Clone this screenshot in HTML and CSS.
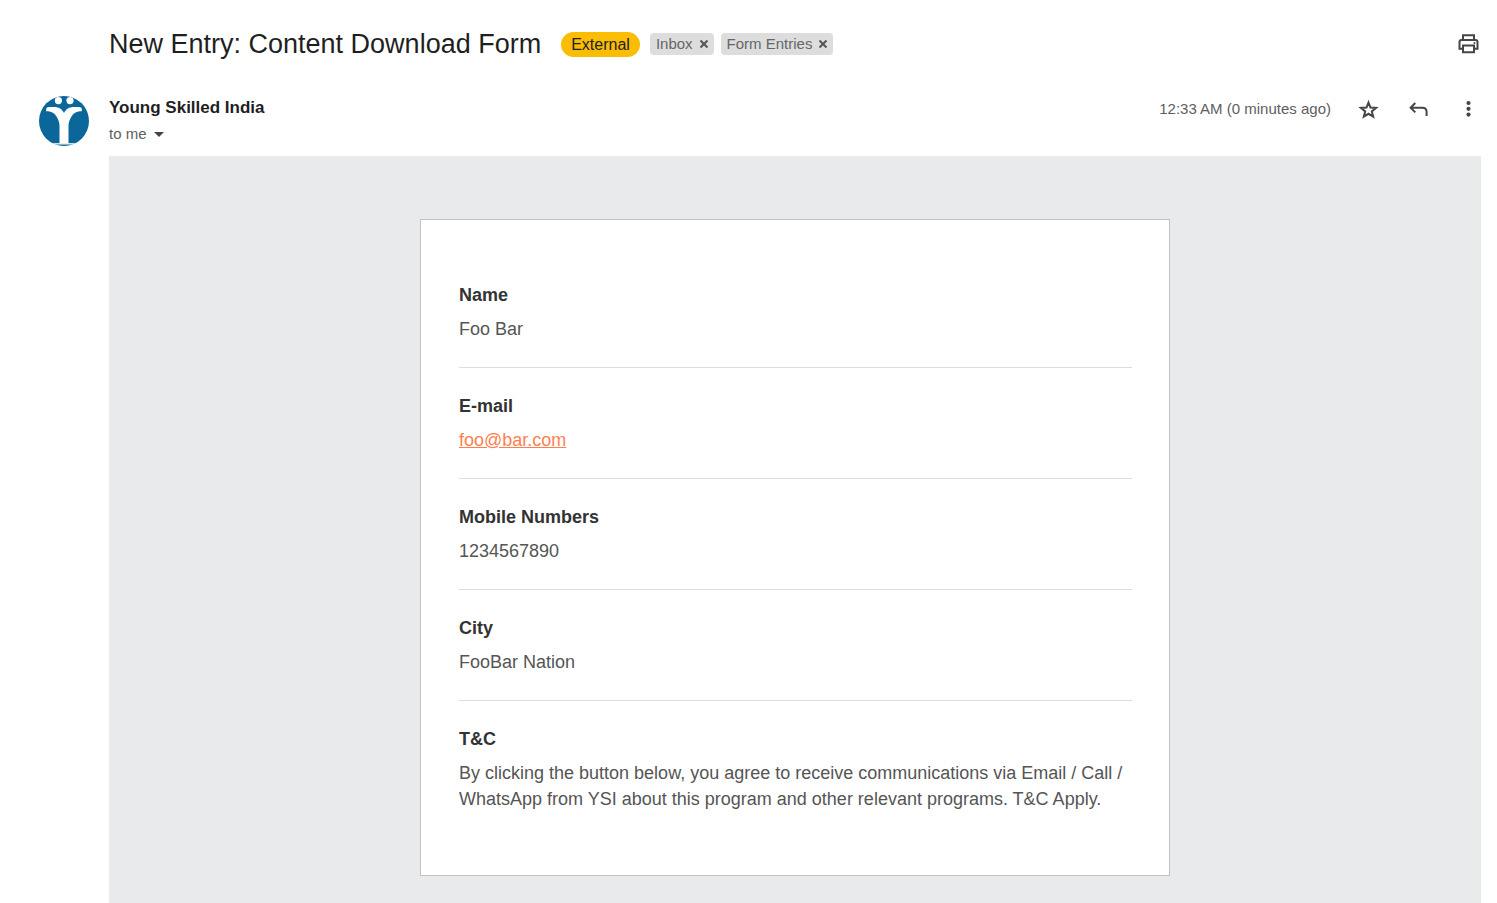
FILE: index.html
```html
<!DOCTYPE html>
<html lang="en">
<head>
<meta charset="utf-8">
<meta name="viewport" content="width=device-width, initial-scale=1">
<title>New Entry: Content Download Form</title>
<link rel="stylesheet" href="styles.css">
</head>
<body>
<header class="subject">
  <h1 class="subject-title">New Entry: Content Download Form</h1>
  <span class="badge">External</span>
  <div class="labels">
    <span class="label">Inbox <button class="label-remove" type="button" aria-label="Remove Inbox"><svg width="8" height="8" viewBox="0 0 8 8"><path d="M.5.5l7 7M7.500.5l-7 7" /></svg></button></span>
    <span class="label">Form Entries <button class="label-remove" type="button" aria-label="Remove Form Entries"><svg width="8" height="8" viewBox="0 0 8 8"><path d="M.5.5l7 7M7.500.5l-7 7" /></svg></button></span>
  </div>
  <button class="icon-button print" type="button" aria-label="Print"><svg width="24" height="24" viewBox="0 0 24 24"><path d="M6 8V3.200h11V8M6 16.800H2.500V10q0-2 2-2h14q2 0 2 2v6.800H17M6 13.500h11v6.700H6z"/><circle cx="17.500" cy="11" r="1" class="solid"/></svg></button>
</header>
<main class="message">
  <svg class="avatar" width="50" height="50" viewBox="0 0 50 50" role="img" aria-label="Young Skilled India">
    <defs><clipPath id="disc"><circle cx="25" cy="25" r="25"/></clipPath></defs>
    <g clip-path="url(#disc)">
      <rect width="50" height="50" fill="#0b6699"/>
      <circle cx="19.400" cy="4.600" r="3.600" fill="#fff"/>
      <circle cx="31" cy="4.600" r="3.600" fill="#fff"/>
      <path d="M7.200 12.500q.5-1.500 2.300-1.500H15c5 0 8 2 10 6 2-4 5-6 10-6h5.500q1.800 0 2.300 1.500v2.700c-5 0-8 1.500-10.300 5.300-1.800 3-3 5.500-3 9.500v17.500h-9V30c0-4-1.200-6.500-3-9.500-2.300-3.800-5.300-5.300-10.300-5.300z" fill="#fff"/>
      <rect y="47.200" width="50" height="1.300" fill="#fff"/>
    </g>
  </svg>
  <div class="message-content">
    <div class="meta">
      <div class="sender">
        <h2 class="sender-name">Young Skilled India</h2>
        <button class="recipient" type="button">to me <svg width="10" height="5" viewBox="0 0 10 5"><path d="M0 0h10L5 5z"/></svg></button>
      </div>
      <div class="actions">
        <time class="time">12:33 AM (0 minutes ago)</time>
        <button class="icon-button" type="button" aria-label="Star"><svg width="24" height="24" viewBox="0 0 24 24"><path d="M11.500 5.500l2 5 5.600.4-4.300 3.500 1.400 5.300-4.700-2.900-4.700 2.900 1.400-5.300-4.300-3.500 5.600-.4z"/></svg></button>
        <button class="icon-button" type="button" aria-label="Reply"><svg width="24" height="24" viewBox="0 0 24 24"><path d="M8.300 6L3.600 10.700l4.700 4.700M3.800 10.700h11.500q4.300 0 4.300 4.300v4"/></svg></button>
        <button class="icon-button" type="button" aria-label="More"><svg width="24" height="24" viewBox="0 0 24 24"><g class="solid"><circle cx="11.500" cy="6" r="2.100"/><circle cx="11.500" cy="11.800" r="2.100"/><circle cx="11.500" cy="17.600" r="2.100"/></g></svg></button>
      </div>
    </div>
    <div class="canvas">
      <dl class="card">
        <div class="field"><dt>Name</dt><dd>Foo Bar</dd></div>
        <div class="field"><dt>E-mail</dt><dd><a href="mailto:foo@bar.com">foo@bar.com</a></dd></div>
        <div class="field"><dt>Mobile Numbers</dt><dd>1234567890</dd></div>
        <div class="field"><dt>City</dt><dd>FooBar Nation</dd></div>
        <div class="field"><dt>T&amp;C</dt><dd>By clicking the button below, you agree to receive communications via Email / Call / WhatsApp from YSI about this program and other relevant programs. T&amp;C Apply.</dd></div>
      </dl>
    </div>
  </div>
</main>
</body>
</html>
```
FILE: styles.css
```css
* { box-sizing: border-box; }

body {
  margin: 0;
  min-height: 100vh;
  display: flex;
  flex-direction: column;
  padding: 24px 16px 0 39px;
  background: #fff;
  color: #202124;
  font-family: Arial, "Liberation Sans", sans-serif;
}

button {
  border: 0;
  padding: 0;
  background: none;
  font: inherit;
  color: inherit;
  cursor: pointer;
}

h1, h2, dl, dd { margin: 0; }

.subject {
  display: flex;
  align-items: center;
  padding-left: 70px;
  height: 40px;
}

.subject-title {
  font-size: 27px;
  line-height: 36px;
  font-weight: 400;
  color: #1f1f1f;
}

.badge {
  margin-left: 20px;
  padding: 0 10px;
  border-radius: 13px;
  background: #fbbc04;
  font-size: 16px;
  line-height: 25px;
}

.labels {
  display: flex;
  gap: 7px;
  margin-left: 10px;
}

.label {
  display: flex;
  align-items: center;
  gap: 7px;
  padding: 0 6px;
  border-radius: 4px;
  background: #ddd;
  color: #666;
  font-size: 15px;
  line-height: 22px;
}

.label-remove { display: flex; }

.label-remove path {
  stroke: #555;
  stroke-width: 2;
}

.icon-button {
  display: flex;
  color: #444746;
}

.icon-button svg {
  fill: none;
  stroke: currentColor;
  stroke-width: 2;
}

.icon-button .solid {
  fill: currentColor;
  stroke: none;
}

.print { margin-left: auto; }

.message {
  flex: 1;
  display: flex;
  gap: 20px;
  padding-top: 32px;
}

.avatar { flex: none; }

.message-content {
  flex: 1;
  display: flex;
  flex-direction: column;
}

.meta {
  display: flex;
  justify-content: space-between;
  height: 60px;
}

.sender-name {
  font-size: 17px;
  line-height: 24px;
  font-weight: 700;
  color: #1f1f1f;
}

.recipient {
  display: flex;
  align-items: center;
  gap: 7px;
  margin-top: 4px;
  font-size: 15px;
  line-height: 20px;
  color: #5e5e5e;
}

.recipient path { fill: #444; }

.actions {
  display: flex;
  align-items: center;
  gap: 26px;
  height: 25px;
}

.time {
  color: #5e5e5e;
  font-size: 15px;
}

.canvas {
  flex: 1;
  padding: 63px 20px 27px;
  background: #e8eaeb;
}

.card {
  max-width: 750px;
  margin: 0 auto;
  padding: 37px 37px 38px 38px;
  border: 1px solid #c1c1c1;
  background: #fff;
  font-size: 18px;
  line-height: 26px;
}

.field { padding: 25px 0; }

.field + .field { border-top: 1px solid #ddd; }

.field dt {
  margin-bottom: 8px;
  font-weight: 700;
  color: #333;
}

.field dd { color: #555; }

.field a { color: #ff7f50; }
```
